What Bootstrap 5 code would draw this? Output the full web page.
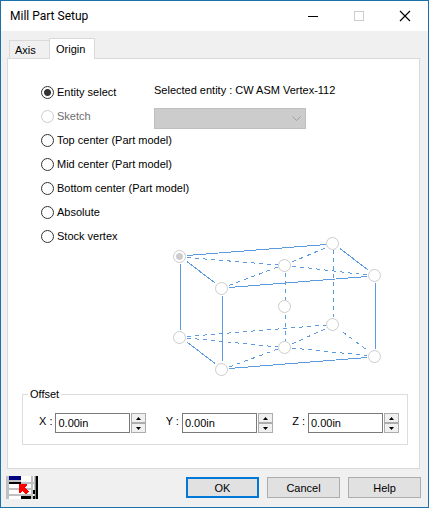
<!DOCTYPE html>
<html lang="en">
<head>
<meta charset="utf-8">
<meta name="viewport" content="width=device-width, initial-scale=1">
<title>Mill Part Setup</title>
<link href="https://cdn.jsdelivr.net/npm/bootstrap@5.3.0/dist/css/bootstrap.min.css" rel="stylesheet">
<style>
body{font:11px/14px "Liberation Sans",Arial,sans-serif;color:#000;background:#f0f0f0}
.win{border:1px solid #1a72a8;background:#f0f0f0}
.titlebar{height:30px;padding-left:9px;font:12px/16px Roboto,"Liberation Sans",sans-serif}
.titlebar h1{font:inherit;margin:0}
.win-btn{width:46px;height:30px;border:0;background:none;padding:0;line-height:0}
.work{padding:7px 8px 0 6px}
.tabs{padding-left:2px}
.tab{border:1px solid #d9d9d9;border-bottom:0;background:#f0f0f0;padding:0 5px;height:18px;width:41px;text-align:left;color:#000}
.tab.active{background:#fff;height:21px;width:46px;margin:0 0 -1px -1px;padding:0 6px;position:relative}
.pane{background:#fff;border:1px solid #d9d9d9;padding:21px 11px 23px 14px}
.origin-grid{display:grid;grid-template-columns:113px 1fr;padding-left:19px}
.opt{height:24px;gap:3px;white-space:nowrap}
.rd{appearance:none;flex:none;width:13px;height:13px;border:1px solid #333;border-radius:50%;background:#fff;margin:0;display:block}
.rd:checked{background:radial-gradient(circle,#333 0 3px,#fff 4px)}
.rd:disabled{border-color:#ccc}
.rd:disabled:checked{background:radial-gradient(circle,#ccc 0 3px,#fff 4px)}
.dim{color:#6d6d6d}
.entity{height:20px;gap:3px}
.combo{width:152px}
.combo select{appearance:none;width:100%;height:21px;background:#ccc;border:1px solid #bfbfbf;border-radius:0;display:block;opacity:1}
.combo svg{position:absolute;right:5px;top:8px}
.diagram{width:208px;height:139px;margin:108px 0 0 19px}
.diagram .rd{position:absolute}
.n1{left:0;top:13px}.n2{left:42px;top:45px}.n3{left:105px;top:22px}.n4{left:153px;top:0}.n5{left:195px;top:32px}
.n6{left:105px;top:63px}.n7{left:0;top:94px}.n8{left:42px;top:126px}.n9{left:105px;top:104px}.n10{left:153px;top:81px}.n11{left:195px;top:113px}
.group{border:1px solid #dcdcdc;margin-top:11px;padding:0 8px 11px 16px}
.group legend{float:none;width:auto;font:inherit;margin:0 0 12px -11px;padding:0 2px}
.axis{gap:3px}
.axis label{margin-top:1px}
.axis input{width:75px;height:20px;border:1px solid #7a7a7a;padding:0 2px;background:#fff;color:#000;border-radius:0}
.spin{margin-left:-2px}
.spin button{width:15px;height:10px;border:1px solid #acacac;background:#f0f0f0;padding:0;line-height:0;display:flex;align-items:center;justify-content:center}
.foot{padding:7px 7px 8px 5px;gap:8px}
.cmd{width:73px;height:21px;border:1px solid #adadad;background:#e1e1e1;color:#000;padding:0}
.cmd.default{border:2px solid #0078d7}
</style>
</head>
<body>
<main class="win min-vh-100 d-flex flex-column">
  <header class="titlebar bg-white d-flex align-items-center justify-content-between">
    <h1>Mill Part Setup</h1>
    <div class="d-flex">
      <button class="win-btn" type="button" aria-label="Minimize"><svg width="12" height="12" shape-rendering="crispEdges"><path d="M1 6.500h10" stroke="#000"/></svg></button>
      <button class="win-btn" type="button" aria-label="Maximize" disabled><svg width="12" height="12" shape-rendering="crispEdges"><path d="M1.500 1.500h9v9h-9z" fill="none" stroke="#ccc"/></svg></button>
      <button class="win-btn" type="button" aria-label="Close"><svg width="12" height="12"><path d="M1 1l10 10M11 1L1 11" stroke="#000" stroke-width="1.200"/></svg></button>
    </div>
  </header>
  <div class="work flex-grow-1">
    <div class="tabs d-flex align-items-end" role="tablist">
      <button class="tab" type="button" role="tab" aria-selected="false">Axis</button>
      <button class="tab active" type="button" role="tab" aria-selected="true">Origin</button>
    </div>
    <section class="pane">
      <div class="origin-grid">
        <div>
          <div class="opt d-flex align-items-center"><input class="rd" type="radio" name="origin" id="o1" checked><label for="o1">Entity select</label></div>
          <div class="opt d-flex align-items-center"><input class="rd" type="radio" name="origin" id="o2" disabled><label class="dim" for="o2">Sketch</label></div>
          <div class="opt d-flex align-items-center"><input class="rd" type="radio" name="origin" id="o3"><label for="o3">Top center (Part model)</label></div>
          <div class="opt d-flex align-items-center"><input class="rd" type="radio" name="origin" id="o4"><label for="o4">Mid center (Part model)</label></div>
          <div class="opt d-flex align-items-center"><input class="rd" type="radio" name="origin" id="o5"><label for="o5">Bottom center (Part model)</label></div>
          <div class="opt d-flex align-items-center"><input class="rd" type="radio" name="origin" id="o6"><label for="o6">Absolute</label></div>
          <div class="opt d-flex align-items-center"><input class="rd" type="radio" name="origin" id="o7"><label for="o7">Stock vertex</label></div>
        </div>
        <div>
          <div class="entity d-flex align-items-center text-nowrap"><span>Selected entity :</span><span>CW ASM Vertex-112</span></div>
          <div class="combo position-relative mt-2">
            <select aria-label="Sketch" disabled></select>
            <svg width="9" height="6" fill="none" stroke="#a0a0a0"><path d="M.5.5l4 4 4-4"/></svg>
          </div>
          <div class="diagram position-relative">
            <svg class="d-block" width="208" height="139" fill="none" stroke="#5c9be0" shape-rendering="crispEdges">
              <path d="M7.500 27v66M49.500 59v65M202.500 46v66M14 18.500L153 7.500M56 50.500L194 39.500M14 24.500L42 46M167 11.500L195 33M14 105L42 126.500M56 131.500L194 120.500"/>
              <path stroke-dasharray="4 4" d="M160.500 13v67M112.500 36v27M112.500 78v26M14 20.500L105 28M56 48.500L105 30M119 25L152 11M119 29L194 38M14 99.500L153 88M14 101L105 110M56 130L105 112M119 107L152 92M119 111L194 118.500M170 95L195 114"/>
            </svg>
            <input class="rd n1" type="radio" name="vertex" aria-label="Top back left" disabled checked>
            <input class="rd n2" type="radio" name="vertex" aria-label="Top front left" disabled>
            <input class="rd n3" type="radio" name="vertex" aria-label="Top center" disabled>
            <input class="rd n4" type="radio" name="vertex" aria-label="Top back right" disabled>
            <input class="rd n5" type="radio" name="vertex" aria-label="Top front right" disabled>
            <input class="rd n6" type="radio" name="vertex" aria-label="Center" disabled>
            <input class="rd n7" type="radio" name="vertex" aria-label="Bottom back left" disabled>
            <input class="rd n8" type="radio" name="vertex" aria-label="Bottom front left" disabled>
            <input class="rd n9" type="radio" name="vertex" aria-label="Bottom center" disabled>
            <input class="rd n10" type="radio" name="vertex" aria-label="Bottom back right" disabled>
            <input class="rd n11" type="radio" name="vertex" aria-label="Bottom front right" disabled>
          </div>
        </div>
      </div>
      <fieldset class="group">
        <legend>Offset</legend>
        <div class="d-flex justify-content-between">
          <div class="axis d-flex"><label for="x">X :</label><input id="x" type="text" value="0.00in"><div class="spin"><button type="button" aria-label="Increase X"><svg width="5" height="3"><path d="M0 3L2.500 0 5 3z"/></svg></button><button type="button" aria-label="Decrease X"><svg width="5" height="3"><path d="M0 0l2.500 3L5 0z"/></svg></button></div></div>
          <div class="axis d-flex"><label for="y">Y :</label><input id="y" type="text" value="0.00in"><div class="spin"><button type="button" aria-label="Increase Y"><svg width="5" height="3"><path d="M0 3L2.500 0 5 3z"/></svg></button><button type="button" aria-label="Decrease Y"><svg width="5" height="3"><path d="M0 0l2.500 3L5 0z"/></svg></button></div></div>
          <div class="axis d-flex"><label for="z">Z :</label><input id="z" type="text" value="0.00in"><div class="spin"><button type="button" aria-label="Increase Z"><svg width="5" height="3"><path d="M0 3L2.500 0 5 3z"/></svg></button><button type="button" aria-label="Decrease Z"><svg width="5" height="3"><path d="M0 0l2.500 3L5 0z"/></svg></button></div></div>
        </div>
      </fieldset>
    </section>
  </div>
  <footer class="foot d-flex align-items-center">
    <svg class="me-auto" width="32" height="23" shape-rendering="crispEdges">
      <path fill="#fff" d="M0 0h32v23H0z"/>
      <path fill="#c0c0c0" d="M0 0h3v23H0zM3 4h12v2H3zM3 12h22v2H3zM3 18h22v2H3zM15 6h13v2H15zM25 0h2v23h-2zM28 0h1v23h-1z"/>
      <path fill="#000080" d="M3 0h12v4H3z"/>
      <path fill="#000" d="M3 6h12v2H3zM13 6h2v3h-2zM30 0h2v23h-2zM27 14h3v4h-3zM15 20h10v3H15zM27 20h3v3h-3z"/>
      <path fill="#808080" d="M29 0h1v23h-1z"/>
      <path fill="red" d="M13 8h8v2h-1v1h-1v1h1v1h1v1h1v1h1v1h-1v1h-1v1h-2v-1h-1v-1h-1v-1h-1v1h-1v1h-2z"/>
    </svg>
    <button class="cmd default" type="button">OK</button>
    <button class="cmd" type="button">Cancel</button>
    <button class="cmd" type="button">Help</button>
  </footer>
</main>
<script src="https://cdn.jsdelivr.net/npm/bootstrap@5.3.0/dist/js/bootstrap.bundle.min.js"></script>
</body>
</html>
